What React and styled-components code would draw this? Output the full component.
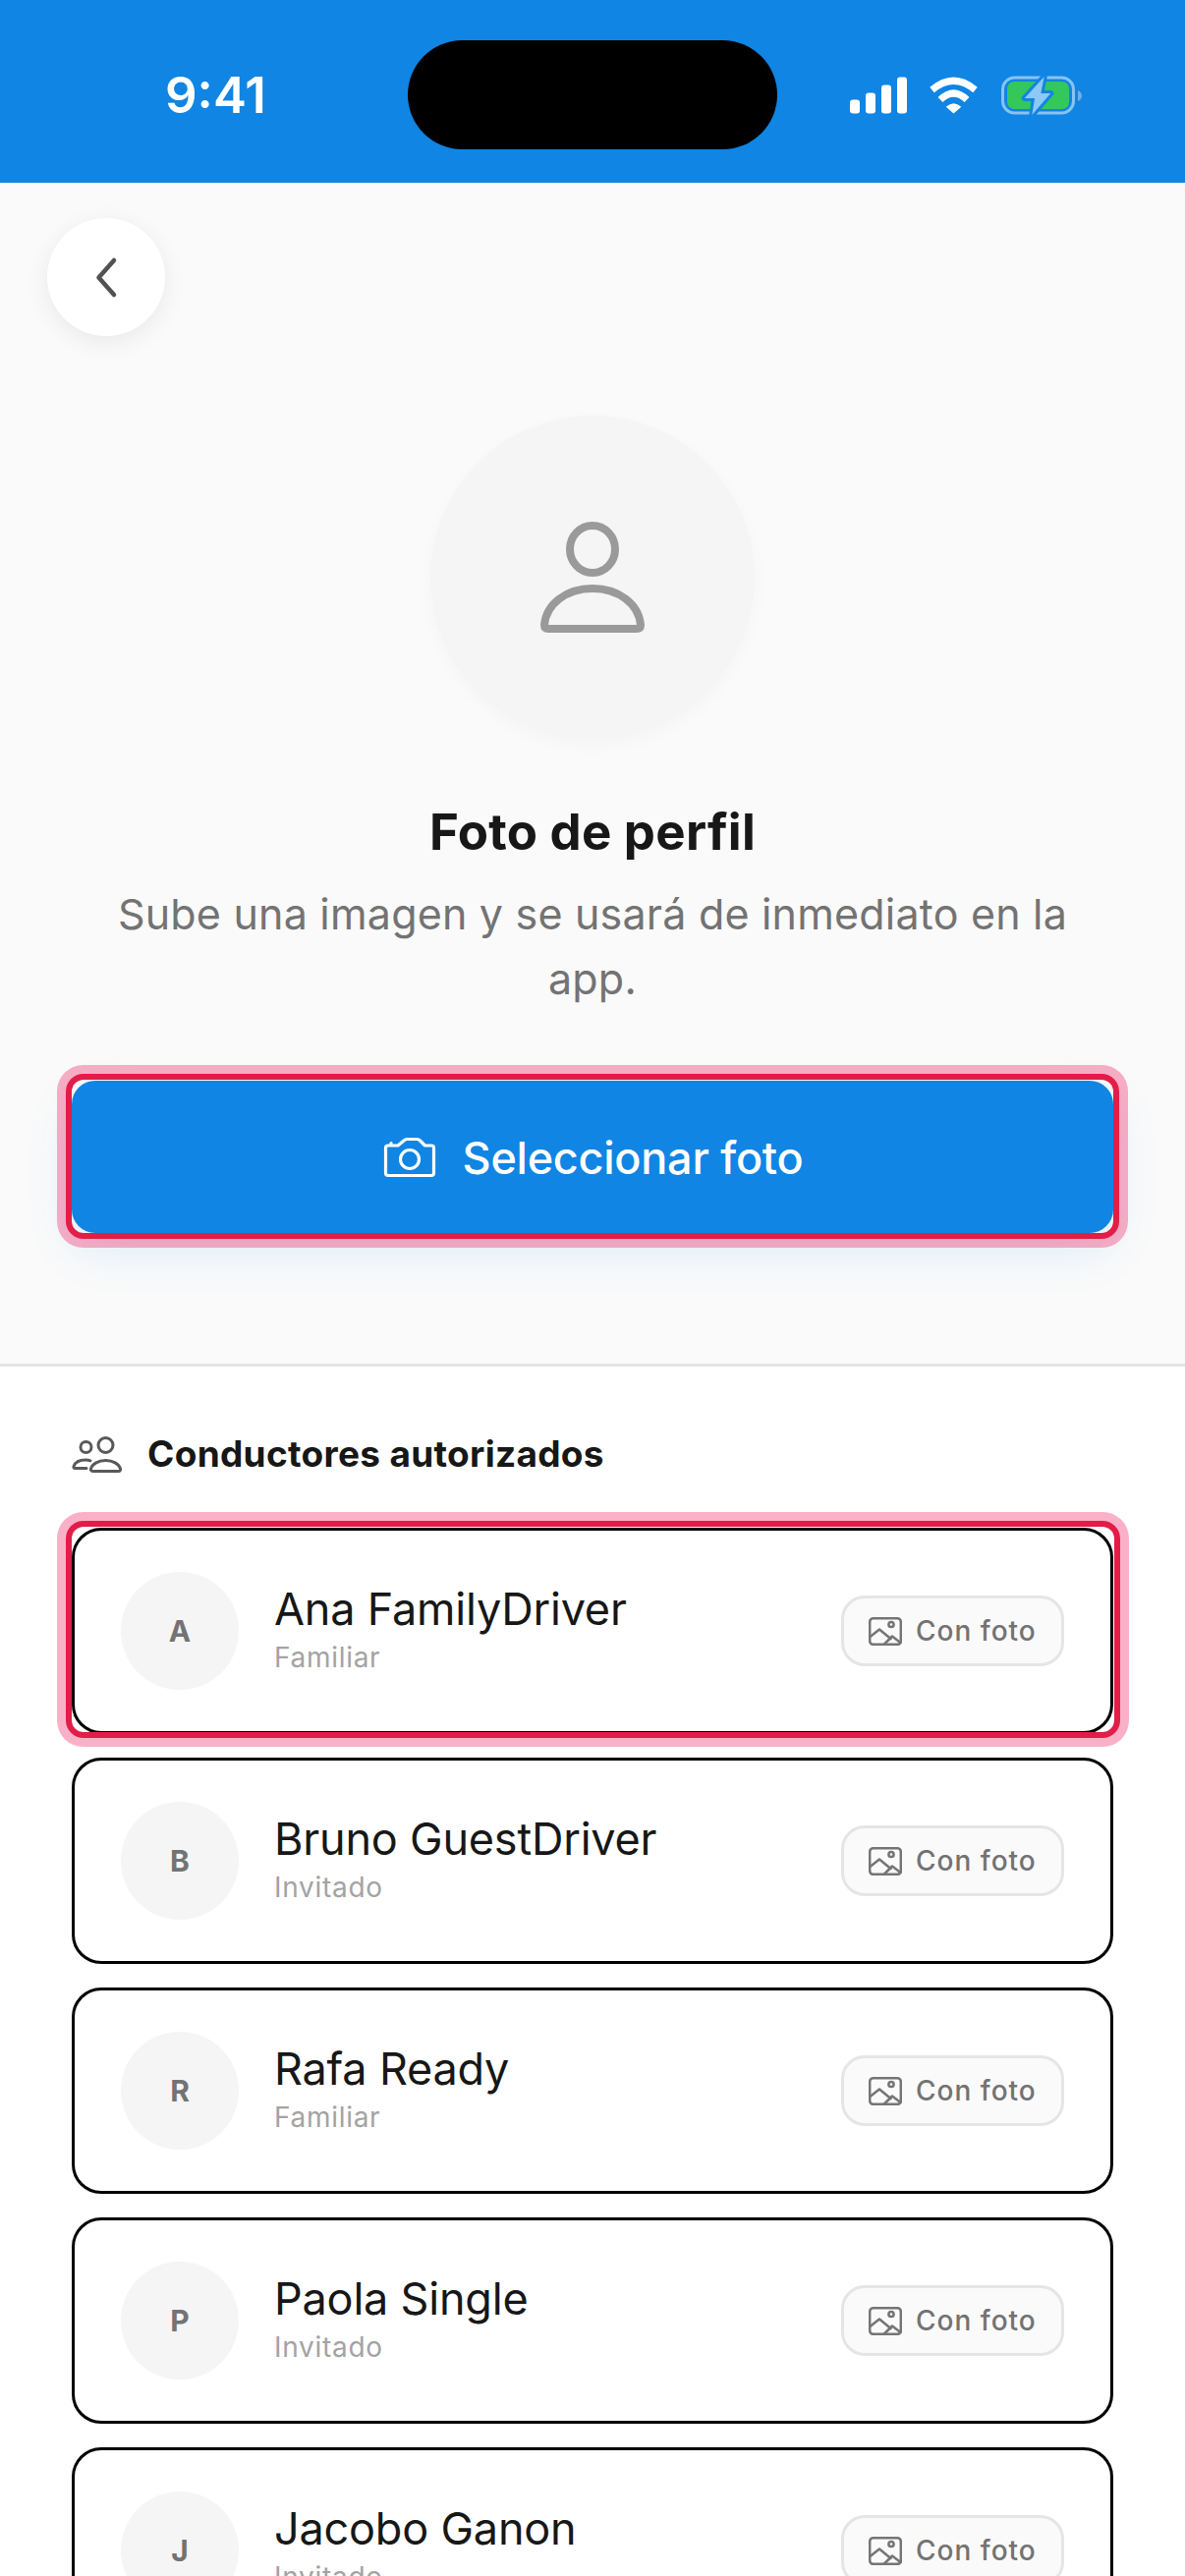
import React from "react";
import styled, { createGlobalStyle, css } from "styled-components";

const Global = createGlobalStyle`
  html, body { margin: 0; padding: 0; background: #fff; }
  * { box-sizing: border-box; }
`;

const Screen = styled.div`
  width: 1206px;
  height: 2622px;
  overflow: hidden;
  background: #fff;
  font-family: Inter, "Noto Sans", sans-serif;
  color: #171717;
`;

const StatusBar = styled.header`
  height: 186px;
  background: #1085e3;
  display: grid;
  grid-template-columns: 415px 376px 415px;
  align-items: center;
  padding-top: 7px;
`;

const Clock = styled.span`
  padding-left: 168px;
  font: 600 51px/60px Inter, sans-serif;
  color: #fff;
`;

const Island = styled.div`
  height: 111px;
  border-radius: 56px;
  background: #000;
`;

const StatusIcons = styled.div`
  display: flex;
  align-items: center;
  gap: 22px;
  padding-left: 74px;
  & > svg { display: block; }
`;

const Hero = styled.section`
  background: #fafafa;
  border-bottom: 3px solid #e5e5e5;
  padding: 36px 73px 133px 48px;
  display: flex;
  flex-direction: column;
`;

const BackButton = styled.button`
  width: 120px;
  height: 120px;
  border: 0;
  padding: 0;
  border-radius: 50%;
  background: #fff;
  box-shadow: 0 6px 24px rgba(0, 0, 0, 0.07);
  display: flex;
  align-items: center;
  justify-content: center;
`;

const HeroBody = styled.div`
  margin-left: 25px;
  margin-top: 81px;
  display: flex;
  flex-direction: column;
  align-items: center;
`;

const BigAvatar = styled.div`
  width: 330px;
  height: 330px;
  border-radius: 50%;
  background: #f5f5f5;
  box-shadow: 0 6px 18px rgba(0, 0, 0, 0.025);
  display: flex;
  align-items: center;
  justify-content: center;
`;

const Title = styled.h1`
  margin: 61px 0 1px;
  font-size: 51px;
  line-height: 66px;
  font-weight: 700;
  letter-spacing: 0.25px;
  color: #171717;
  text-align: center;
`;

const Subtitle = styled.p`
  margin: 16px 0 0;
  max-width: 1040px;
  font-size: 43px;
  line-height: 66px;
  font-weight: 400;
  letter-spacing: 0.2px;
  color: #737373;
  text-align: center;
`;

const highlight = css`
  position: relative;
  &::after {
    content: "";
    position: absolute;
    border-radius: 12px;
    box-shadow: 0 0 0 6px #e11d48, 0 0 0 15px rgba(240, 40, 100, 0.36);
    pointer-events: none;
  }
`;

const PrimaryButton = styled.button`
  ${highlight}
  width: 1060px;
  height: 155px;
  margin-top: 71px;
  padding: 2px 0 0;
  border: 0;
  border-radius: 24px;
  background: #1085e3;
  color: #fff;
  font-family: inherit;
  font-size: 45px;
  line-height: 56px;
  font-weight: 540;
  letter-spacing: -0.25px;
  display: flex;
  align-items: center;
  justify-content: center;
  gap: 26px;
  box-shadow: 0 18px 48px rgba(16, 133, 227, 0.12);
  &::after {
    inset: -1px 0 0;
  }
  & > svg { margin-top: -2px; }
`;

const Drivers = styled.section`
  padding: 67px 73px 0;
`;

const SectionHeader = styled.div`
  display: flex;
  align-items: center;
  gap: 25px;
  height: 44px;
  margin-bottom: 53px;
`;

const SectionTitle = styled.h2`
  margin: 0;
  font-size: 37px;
  line-height: 44px;
  font-weight: 650;
  letter-spacing: 0.3px;
  color: #171717;
`;

const DriverList = styled.ul`
  list-style: none;
  margin: 0;
  padding: 0;
  display: flex;
  flex-direction: column;
  gap: 24px;
`;

const DriverCard = styled.li`
  height: 210px;
  flex: none;
  border: 3px solid #000;
  border-radius: 30px;
  background: #fff;
  padding: 0 47px;
  display: flex;
  align-items: center;
  ${(p) =>
    p.$selected &&
    css`
      ${highlight}
      &::after {
        top: -4px;
        left: -3px;
        right: -4px;
        bottom: -1px;
      }
    `}
`;

const Avatar = styled.div`
  width: 120px;
  height: 120px;
  flex: none;
  border-radius: 50%;
  background: #f5f5f5;
  color: #737373;
  font-size: 30px;
  font-weight: 700;
  display: flex;
  align-items: center;
  justify-content: center;
`;

const DriverInfo = styled.div`
  flex: 1;
  margin-left: 36px;
  display: flex;
  flex-direction: column;
`;

const DriverName = styled.span`
  font-size: 45px;
  line-height: 54px;
  font-weight: 400;
  letter-spacing: -0.2px;
  color: #171717;
`;

const DriverRole = styled.span`
  font-size: 28px;
  line-height: 44px;
  font-weight: 400;
  letter-spacing: 0.7px;
  color: #a3a3a3;
`;

const PhotoBadge = styled.div`
  width: 227px;
  height: 72px;
  flex: none;
  border: 3px solid #e5e5e5;
  border-radius: 24px;
  background: #fafafa;
  padding-left: 25px;
  display: flex;
  align-items: center;
  gap: 14px;
  color: #737373;
  font-size: 28px;
  font-weight: 500;
  letter-spacing: 1px;
  white-space: nowrap;
`;

const SignalIcon = () => (
  <svg width="58" height="38" viewBox="865 78.5 58 38" fill="#fff">
    <rect x="865" y="102" width="10" height="14" rx="3" />
    <rect x="881" y="95" width="10" height="21" rx="3" />
    <rect x="897" y="87" width="10" height="29" rx="3" />
    <rect x="913" y="79" width="10" height="37" rx="3" />
  </svg>
);

const WifiIcon = () => (
  <svg width="51" height="38" viewBox="945 78.5 51 38" fill="none" stroke="#fff" strokeWidth="7">
    <path d="M948.5 92 Q970.5 73.5 992.5 92" />
    <path d="M957 102 Q970.5 89 984 102" />
    <path d="M970.5 116 L962.7 109.3 Q970.5 102 978.3 109.3 Z" fill="#fff" stroke="none" />
  </svg>
);

const BatteryIcon = () => (
  <svg width="84" height="44" viewBox="1017 75 84 44">
    <rect x="1019.5" y="79" width="72" height="36" rx="12" fill="none" stroke="#87c3f3" strokeWidth="3" />
    <rect x="1024" y="83" width="63" height="28" rx="7" fill="#34c759" />
    <path d="M1096 92 Q1100 94 1100 97.5 Q1100 101 1096 103 Z" fill="#6ab0ee" />
    <path
      d="M1061.7 78 L1041.7 100 L1052 100 L1049.3 117 L1068.3 95 L1058.3 95 Z"
      fill="#8ec8f5"
      stroke="#1085e3"
      strokeWidth="6"
      strokeLinejoin="round"
      paintOrder="stroke"
    />
  </svg>
);

const ChevronIcon = () => (
  <svg width="24" height="44" viewBox="96 260 24 44" fill="none" stroke="#525252" strokeWidth="4.5" strokeLinecap="round" strokeLinejoin="round">
    <path d="M116 265 L100.5 282.5 L116 300" />
  </svg>
);

const PersonIcon = () => (
  <svg width="112" height="120" viewBox="547 528 112 120" fill="none" stroke="#9a9a9a" strokeWidth="8" strokeLinejoin="round">
    <ellipse cx="603" cy="559" rx="23" ry="24" />
    <path d="M558 640 H648 Q652 640 652 636 C650 615 630 599 603 599 C576 599 556 615 554 636 Q554 640 558 640 Z" />
  </svg>
);

const CameraIcon = () => (
  <svg width="56" height="44" viewBox="388 1156 56 44" fill="none" stroke="#fff" strokeWidth="3.2" strokeLinecap="round" strokeLinejoin="round">
    <path d="M394 1166 H404 L410 1161 Q411.500 1159.500 413.500 1159.500 H423 Q425 1159.500 426.500 1161 L431.500 1166 H438 Q440.500 1166 440.500 1168.500 V1194 Q440.500 1196.500 438 1196.500 H394 Q391.500 1196.500 391.500 1194 V1168.500 Q391.500 1166 394 1166 Z" />
    <path d="M397 1165 V1163.500" />
    <circle cx="416" cy="1180" r="9.500" />
  </svg>
);

const GroupIcon = () => (
  <svg width="52" height="41" viewBox="73 1458 52 41" fill="none" stroke="#595959" strokeWidth="3" strokeLinecap="round" strokeLinejoin="round">
    <circle cx="107.500" cy="1469" r="7.500" />
    <circle cx="87.500" cy="1471" r="5.500" />
    <path d="M95 1495.500 H120.500 Q123 1495.500 122.500 1493 C121 1488 115 1484.500 107.500 1484.500 C100 1484.500 94 1488 92.500 1493 Q92 1495.500 95 1495.500 Z" />
    <path d="M88 1492.500 H76.500 Q74.500 1492.500 75 1490.500 C76.500 1486.500 81 1484 87 1484 Q90 1484 92 1484.800" />
  </svg>
);

const ImageIcon = () => (
  <svg width="34" height="29" viewBox="884 1646 34 29" fill="none" stroke="#757575" strokeWidth="2.500" strokeLinecap="round" strokeLinejoin="round" style={{ flex: "none" }}>
    <rect x="885.200" y="1647.200" width="31.600" height="26.600" rx="3.500" />
    <circle cx="907" cy="1653.500" r="2.600" />
    <path d="M885.500 1666 L895 1658.500 L906.500 1668" />
    <path d="M900 1673.500 L908 1665.500 L916.500 1672" />
  </svg>
);

const drivers = [
  { initial: "A", name: "Ana FamilyDriver", role: "Familiar", selected: true },
  { initial: "B", name: "Bruno GuestDriver", role: "Invitado" },
  { initial: "R", name: "Rafa Ready", role: "Familiar" },
  { initial: "P", name: "Paola Single", role: "Invitado" },
  { initial: "J", name: "Jacobo Ganon", role: "Invitado" },
];

export default function App() {
  return (
    <Screen>
      <Global />
      <StatusBar>
        <Clock>9:41</Clock>
        <Island />
        <StatusIcons>
          <SignalIcon />
          <WifiIcon />
          <BatteryIcon />
        </StatusIcons>
      </StatusBar>
      <Hero>
        <BackButton aria-label="Volver">
          <ChevronIcon />
        </BackButton>
        <HeroBody>
          <BigAvatar>
            <PersonIcon />
          </BigAvatar>
          <Title>Foto de perfil</Title>
          <Subtitle>Sube una imagen y se usará de inmediato en la app.</Subtitle>
          <PrimaryButton>
            <CameraIcon />
            Seleccionar foto
          </PrimaryButton>
        </HeroBody>
      </Hero>
      <Drivers>
        <SectionHeader>
          <GroupIcon />
          <SectionTitle>Conductores autorizados</SectionTitle>
        </SectionHeader>
        <DriverList>
          {drivers.map((d) => (
            <DriverCard key={d.name} $selected={d.selected}>
              <Avatar>{d.initial}</Avatar>
              <DriverInfo>
                <DriverName>{d.name}</DriverName>
                <DriverRole>{d.role}</DriverRole>
              </DriverInfo>
              <PhotoBadge>
                <ImageIcon />
                Con foto
              </PhotoBadge>
            </DriverCard>
          ))}
        </DriverList>
      </Drivers>
    </Screen>
  );
}
